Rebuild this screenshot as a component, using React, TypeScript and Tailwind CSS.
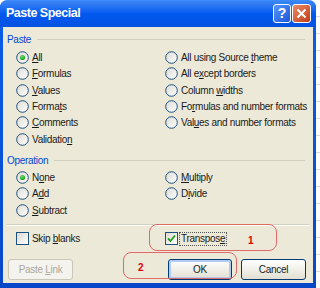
import React from 'react';

const font = { fontFamily: '"Liberation Sans", Arial, sans-serif' };

// text with one underlined access key
const Label = ({ text, k }: { text: string; k: number }) => (
  <span>
    {text.slice(0, k)}
    <span className="underline underline-offset-[1px]">{text[k]}</span>
    {text.slice(k + 1)}
  </span>
);

const Radio = ({ on }: { on?: boolean }) => (
  <svg width="13" height="13" viewBox="0 0 13 13" className="shrink-0">
    <defs>
      <linearGradient id="rg" x1="0" y1="0" x2="1" y2="1">
        <stop offset="0" stopColor="#dcdad2" />
        <stop offset="1" stopColor="#ffffff" />
      </linearGradient>
      <radialGradient id="dot" cx="0.4" cy="0.35" r="0.7">
        <stop offset="0" stopColor="#6fe06f" />
        <stop offset="1" stopColor="#17951a" />
      </radialGradient>
    </defs>
    <circle cx="6.5" cy="6.5" r="5.8" fill="url(#rg)" stroke="#1c5180" strokeWidth="1" />
    {on && <circle cx="6.5" cy="6.5" r="2.6" fill="url(#dot)" />}
  </svg>
);

const Check = ({ on }: { on?: boolean }) => (
  <div className="w-[13px] h-[13px] border border-[#1c5180] bg-gradient-to-br from-[#dcdad2] to-white flex items-center justify-center shrink-0">
    {on && (
      <svg width="9" height="9" viewBox="0 0 9 9">
        <path d="M1 4.5 L3.5 7 L8 1.5" fill="none" stroke="#21a121" strokeWidth="1.8" />
      </svg>
    )}
  </div>
);

const Opt = ({ text, k, on }: { text: string; k: number; on?: boolean }) => (
  <div className="h-[16.3px] flex items-center gap-[3px]">
    <Radio on={on} />
    <Label text={text} k={k} />
  </div>
);

const Group = ({ title }: { title: string }) => (
  <div className="h-[13px] flex items-center pl-[4px] pr-[8px]">
    <span className="text-[#0046d5]">{title}</span>
    <div className="flex-1 ml-[6px] border-t border-[#d0d0bf]" />
  </div>
);

const App = () => {
  return (
    <div
      className="w-[320px] h-[288px] bg-[repeating-linear-gradient(to_bottom,#ffffff_0px,#ffffff_16px,#d6d9e0_16px,#d6d9e0_17px)] overflow-hidden"
      style={font}
    >
      <div className="w-[316px] h-[288px] flex flex-col rounded-t-[7px] bg-gradient-to-b from-[#0a5fe8] to-[#0848c8] border-t border-[#3d8cff]">
        {/* title bar */}
        <div className="h-[26px] flex items-center pl-[6px] pr-[5px] bg-gradient-to-b from-[#3b86f5] via-[#0058ee] to-[#0553e2] rounded-t-[7px]">
          <span className="text-white font-bold text-[12.5px] tracking-[-0.5px] mt-[-1px]">Paste Special</span>
          <div className="ml-auto flex gap-[1px] mt-[-2px]">
            <div className="w-[18px] h-[19px] rounded-[3px] border border-white bg-gradient-to-br from-[#5a96ff] to-[#1b55d8] flex items-center justify-center text-white font-bold text-[14px] leading-none">
              ?
            </div>
            <div className="w-[19px] h-[19px] rounded-[3px] border border-white bg-gradient-to-br from-[#e88a63] to-[#c23a15] flex items-center justify-center">
              <svg width="11" height="11" viewBox="0 0 11 11">
                <path d="M1.5 1.5 L9.5 9.5 M9.5 1.5 L1.5 9.5" stroke="#fff" strokeWidth="2" />
              </svg>
            </div>
          </div>
        </div>

        {/* body */}
        <div className="relative mx-[3px] mb-[5px] flex-1 bg-[#ece9d8] text-[10px] tracking-[-0.3px] text-[#1a1a1a] pt-[6px]">
          <Group title="Paste" />
          <div className="grid grid-cols-[149px_1fr] pl-[13px] mt-[3.5px]">
            <div className="flex flex-col">
              <Opt text="All" k={0} on />
              <Opt text="Formulas" k={0} />
              <Opt text="Values" k={0} />
              <Opt text="Formats" k={5} />
              <Opt text="Comments" k={0} />
              <Opt text="Validation" k={9} />
            </div>
            <div className="flex flex-col">
              <Opt text="All using Source theme" k={17} />
              <Opt text="All except borders" k={5} />
              <Opt text="Column widths" k={7} />
              <Opt text="Formulas and number formats" k={2} />
              <Opt text="Values and number formats" k={3} />
            </div>
          </div>

          <div className="mt-[6.5px]">
            <Group title="Operation" />
          </div>
          <div className="grid grid-cols-[149px_1fr] pl-[13px] mt-[2.5px]">
            <div className="flex flex-col">
              <Opt text="None" k={1} on />
              <Opt text="Add" k={1} />
              <Opt text="Subtract" k={0} />
            </div>
            <div className="flex flex-col">
              <Opt text="Multiply" k={0} />
              <Opt text="Divide" k={1} />
            </div>
          </div>

          <div className="mx-[4px] mt-[6px] border-t border-[#d0d0bf] border-b border-b-white" />

          <div className="grid grid-cols-[149px_1fr] pl-[13px] mt-[5px] h-[14px]">
            <div className="flex items-center gap-[3px]">
              <Check />
              <Label text="Skip blanks" k={5} />
            </div>
            <div className="flex items-center gap-[1px]">
              <Check on />
              <span className="border border-dotted border-[#555] px-[1px] leading-[12px]">
                <Label text="Transpose" k={8} />
              </span>
            </div>
          </div>

          <div className="flex items-center mt-[14px] pl-[5px] pr-[7px]">
            <div className="w-[65px] h-[21px] rounded-[3px] border border-[#c9c7ba] bg-[#f4f3ee] flex items-center justify-center text-[#aca899]">
              <Label text="Paste Link" k={6} />
            </div>
            <div className="ml-auto w-[64px] h-[21px] rounded-[3px] border border-[#003c74] bg-gradient-to-b from-white to-[#e3e0d2] shadow-[inset_0_0_0_2px_#b2cbf3] flex items-center justify-center">
              OK
            </div>
            <div className="ml-[9px] w-[65px] h-[21px] rounded-[3px] border border-[#003c74] bg-gradient-to-b from-white to-[#e3e0d2] flex items-center justify-center">
              Cancel
            </div>
          </div>

          {/* red annotations */}
          <div className="absolute left-[146px] top-[197px] w-[128px] h-[27px] rounded-[8px] border border-[#e06a6a]" />
          <span className="absolute left-[245px] top-[206px] text-[#e00000] font-bold text-[10px]">1</span>
          <div className="absolute left-[120px] top-[225px] w-[114px] h-[27px] rounded-[8px] border border-[#e06a6a]" />
          <span className="absolute left-[135px] top-[233px] text-[#e00000] font-bold text-[10px]">2</span>
        </div>
      </div>
    </div>
  );
};

export default App;
